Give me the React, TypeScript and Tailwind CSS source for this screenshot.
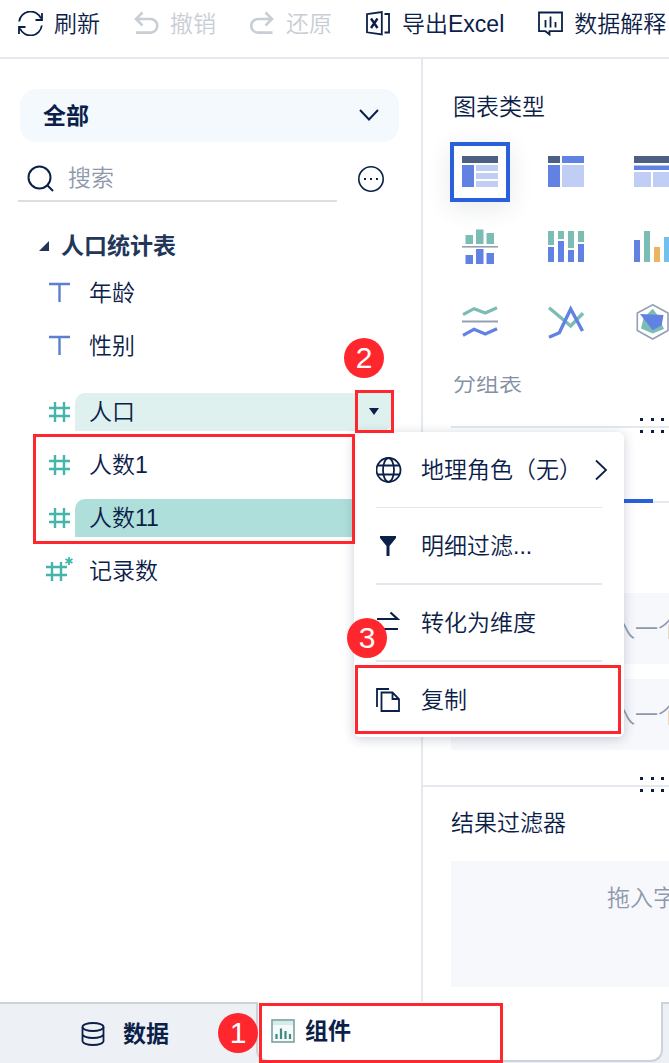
import { useState } from 'react';
import type { ReactNode } from 'react';
import clsx from 'clsx';

type FieldType = 'text' | 'number' | 'count';

interface Field {
  name: string;
  type: FieldType;
}

const dimensions: Field[] = [
  { name: '年龄', type: 'text' },
  { name: '性别', type: 'text' },
];

const NAVY = '#0b2048';
const BLUE = '#6182e2';
const LIGHT = '#c0cdf5';
const SLATE = '#4d5f83';
const GREEN = '#7bbdb5';
const GRAY = '#959fb4';

/* ---------- toolbar icons ---------- */

const RefreshIcon = () => (
  <svg width="25" height="25" viewBox="0 0 25 25" fill="none" stroke="currentColor" strokeWidth="1.8">
    <path d="M1.2 10.5A11.4 11.4 0 0 1 23 7.5M24 2v7h-6.5M23.8 14.5A11.4 11.4 0 0 1 2 17.5M1 23v-7h6.5" />
  </svg>
);

const UndoIcon = () => (
  <svg width="25" height="25" viewBox="0 0 25 25" fill="none" stroke="currentColor" strokeWidth="2.6">
    <path d="M8.5 1.5 2 8l6.500 6.500M2 8h14.500a6.800 6.800 0 0 1 0 13.600H2" />
  </svg>
);

const RedoIcon = () => (
  <svg width="25" height="25" viewBox="0 0 25 25" fill="none" stroke="currentColor" strokeWidth="2.6">
    <path d="M15.5 1.5 22 8l-6.500 6.500M22 8H8a6.800 6.800 0 0 0 0 13.600h14.500" />
  </svg>
);

const ExcelIcon = () => (
  <svg width="25" height="25" viewBox="0 0 25 25" fill="none" stroke="currentColor" strokeWidth="1.8">
    <path d="M1 3.2 15.8 1v22.500L1 21.300zM18.500 3H23v18.500h-4.500" />
    <path d="m5 7.500 6.500 9.500M11.500 7.500 5 17" strokeWidth="2.4" />
  </svg>
);

const ExplainIcon = () => (
  <svg width="25" height="25" viewBox="0 0 25 25" fill="none" stroke="currentColor" strokeWidth="1.8">
    <path d="M1 1.500h23v18.700H11.500v3.300l-4-3.300H1zM7.500 9v7.500M12.500 5.500v11M17.500 11v5.500" />
  </svg>
);

const tools: { label: string; icon: ReactNode; disabled?: boolean }[] = [
  { label: '刷新', icon: <RefreshIcon /> },
  { label: '撤销', icon: <UndoIcon />, disabled: true },
  { label: '还原', icon: <RedoIcon />, disabled: true },
  { label: '导出Excel', icon: <ExcelIcon /> },
  { label: '数据解释', icon: <ExplainIcon /> },
];

/* ---------- field icons ---------- */

const FieldIcon = ({ type }: { type: FieldType }) => {
  if (type === 'text') {
    return (
      <svg className="shrink-0" width="29" height="26" viewBox="0 0 29 26" fill="none" stroke="#5b80d0" strokeWidth="2.4">
        <path d="M3 4h21M13.500 4v18" />
      </svg>
    );
  }
  if (type === 'count') {
    return (
      <svg className="shrink-0 overflow-visible" width="29" height="26" viewBox="0 0 29 26" fill="none" stroke="#43b5aa" strokeWidth="2.4">
        <path d="M0 9h21M0 17h21M6 4v19M15 4v19" />
        <path d="M23-1v8M19.500 1l7 4M26.500 1l-7 4" strokeWidth="1.8" />
      </svg>
    );
  }
  return (
    <svg className="shrink-0" width="29" height="26" viewBox="0 0 29 26" fill="none" stroke="#43b5aa" strokeWidth="2.4">
      <path d="M3 9h21M3 17h21M9 3v20M18 3v20" />
    </svg>
  );
};

/* ---------- menu icons ---------- */

const GlobeIcon = () => (
  <svg className="shrink-0" width="26" height="26" viewBox="0 0 26 26" fill="none" stroke={NAVY} strokeWidth="1.8">
    <circle cx="12.5" cy="13" r="12" />
    <ellipse cx="12.5" cy="13" rx="5.500" ry="12" />
    <path d="M2 8.500h21M2 17.500h21" />
  </svg>
);

const FilterIcon = () => (
  <svg className="shrink-0" width="26" height="26" viewBox="0 0 26 26">
    <path d="M4 3h16v2l-6.500 8v10h-3V13L4 5z" fill={NAVY} />
  </svg>
);

const ConvertIcon = () => (
  <svg className="shrink-0" width="26" height="26" viewBox="0 0 26 26" fill="none" stroke={NAVY} strokeWidth="2.2">
    <path d="M1 9h20.500l-7-6.500M22 19H1l7 6" />
  </svg>
);

const CopyIcon = () => (
  <svg className="shrink-0" width="26" height="26" viewBox="0 0 26 26" fill="none" stroke={NAVY} strokeWidth="1.8">
    <path d="M1 20V2h12" />
    <path d="M5.500 5.500h11l6.500 6.500v12H5.500zM16.500 5.500V12H23" />
  </svg>
);

/* ---------- chart type icons ---------- */

const Bars = ({ bars }: { bars: [number, number, number, number, string][] }) => (
  <>
    {bars.map(([x, y, w, h, fill]) => (
      <rect key={`${x}-${y}`} x={x} y={y} width={w} height={h} fill={fill} />
    ))}
  </>
);

const chartTypes: { name: string; drawing: ReactNode }[] = [
  {
    name: '分组表',
    drawing: <Bars bars={[[0, 2, 36, 7, SLATE], [0, 11, 12, 22, BLUE], [14, 11, 22, 6, LIGHT], [14, 19, 22, 6, LIGHT], [14, 27, 22, 6, LIGHT]]} />,
  },
  {
    name: '交叉表',
    drawing: <Bars bars={[[0, 2, 12, 7, SLATE], [14, 2, 22, 7, BLUE], [0, 11, 12, 22, BLUE], [14, 11, 22, 22, LIGHT]]} />,
  },
  {
    name: '明细表',
    drawing: <Bars bars={[[0, 2, 36, 7, SLATE], [0, 11.5, 36, 4.5, BLUE], [0, 18, 17, 15, LIGHT], [19, 18, 17, 15, LIGHT]]} />,
  },
  {
    name: '对比柱状图',
    drawing: (
      <Bars
        bars={[
          [3.5, 6, 7.5, 9, GREEN], [14, 0.5, 7.5, 14.5, GREEN], [24.5, 4, 7.5, 11, GREEN],
          [0, 17, 36, 1.6, GRAY],
          [3.5, 26, 7.5, 9, BLUE], [14, 20, 7.5, 15, BLUE], [24.5, 24, 7.5, 11, BLUE],
        ]}
      />
    ),
  },
  {
    name: '堆积柱状图',
    drawing: (
      <Bars
        bars={[
          [0, 2, 6, 14, GREEN], [10, 2, 6, 8, GREEN], [20, 2, 6, 17, GREEN], [30, 2, 6, 11, GREEN],
          [0, 18, 6, 15, BLUE], [10, 12, 6, 21, BLUE], [20, 21, 6, 12, BLUE], [30, 15, 6, 18, BLUE],
        ]}
      />
    ),
  },
  {
    name: '分区柱形图',
    drawing: <Bars bars={[[0, 11, 6, 22, BLUE], [10, 2, 6, 31, GREEN], [20, 18, 6, 15, '#ecb45f'], [30, 8, 6, 25, '#70c1ee']]} />,
  },
  {
    name: '范围面积图',
    drawing: (
      <g fill="none" strokeWidth="3.2">
        <path d="M1 10.700 12 4.700 23.300 9 35 3.700" stroke={GREEN} />
        <path d="M0 17.500h36" stroke={GRAY} strokeWidth="1.8" />
        <path d="M1 31.300 12 25.300 23.300 30 35 24.700" stroke={BLUE} />
      </g>
    ),
  },
  {
    name: '多系列折线图',
    drawing: (
      <g fill="none" strokeWidth="3.4">
        <path d="M1 3.700 22.700 22 35 9.300" stroke={GREEN} />
        <path d="M1 33.300 11.300 28.700 22.700 5 34.500 27" stroke={BLUE} />
      </g>
    ),
  },
  {
    name: '雷达图',
    drawing: (
      <>
        <path d="M18.700.800 34 9v17.500l-15.300 8.500L3.300 26.500V9z" fill="none" stroke={GRAY} strokeWidth="1.6" />
        <path d="M18.700 4.700 23.500 11 30 25l-11.300 4.500L7 24.500 9.500 14z" fill={GREEN} />
        <path d="M6 10 29.500 11l-1.800 10.300-9 5z" fill={BLUE} />
      </>
    ),
  },
];

/* ---------- callouts ---------- */

const Step = ({ n, className }: { n: number; className: string }) => (
  <span className={clsx('absolute z-40 flex size-10 items-center justify-center rounded-full bg-[#ff272e] text-[30px] leading-none font-normal text-white', className)}>{n}</span>
);

const Frame = ({ className }: { className: string }) => (
  <span className={clsx('pointer-events-none absolute z-30 border-3 border-[#ff272e]', className)} />
);

const DragDots = () => (
  <svg className="absolute -top-2 left-[217px]" width="55" height="15" viewBox="0 0 55 15" fill={NAVY}>
    {[0, 11, 21, 31, 42].map((x) => (
      <g key={x}>
        <rect x={x} y="0" width="3" height="3" />
        <rect x={x} y="12" width="3" height="3" />
      </g>
    ))}
  </svg>
);

const FieldRow = ({ field, highlight, children }: { field: Field; highlight?: string; children?: ReactNode }) => (
  <li className="relative flex h-[38px] items-center">
    <FieldIcon type={field.type} />
    <div className={clsx('flex h-full flex-1 items-center rounded-tl-[10px] rounded-br-[10px]', highlight)}>
      <button className="flex-1 pl-[14px] text-left">{field.name}</button>
    </div>
    {children}
  </li>
);

const FieldMenu = () => (
  <div role="menu" className="absolute top-[39px] left-[308px] z-20 w-[270px] rounded-md bg-white px-[22px] shadow-[0_2px_12px_rgba(20,35,70,0.22)]">
    <button role="menuitem" className="flex h-[76px] w-full items-center gap-[19px] border-b border-[#e4e8ee] text-left whitespace-nowrap">
      <GlobeIcon />
      <span className="flex-1">地理角色（无）</span>
      <svg className="-mr-[6px] -ml-8 shrink-0" width="14" height="22" viewBox="0 0 14 22" fill="none" stroke={NAVY} strokeWidth="1.8">
        <path d="m2 1.500 10 9.500-10 9.500" />
      </svg>
    </button>
    <button role="menuitem" className="flex h-[77px] w-full items-center gap-[19px] border-b-2 border-[#e4e8ee] text-left">
      <FilterIcon />
      明细过滤...
    </button>
    <button role="menuitem" className="flex h-[77px] w-full items-center gap-[19px] border-b-2 border-[#e4e8ee] text-left">
      <ConvertIcon />
      转化为维度
    </button>
    <button role="menuitem" className="flex h-[75px] w-full items-center gap-[19px] text-left">
      <CopyIcon />
      复制
    </button>
    <Frame className="bottom-[3px] left-px h-[69px] w-[266px]" />
    <Step n={3} className="bottom-[79px] -left-[7px]" />
  </div>
);

const FieldPanel = () => {
  const [menuOpen, setMenuOpen] = useState(true);

  return (
    <aside className="w-[423px] shrink-0 border-r-2 border-[#e5e8ef] pt-[30px]">
      <div className="pr-[22px] pl-[18px]">
        <div className="relative ml-0.5">
          <select aria-label="字段范围" className="h-[53px] w-full appearance-none rounded-2xl bg-[#f4f9fe] pl-[23px] font-bold">
            <option>全部</option>
          </select>
          <svg className="pointer-events-none absolute top-[19px] right-5" width="20" height="14" viewBox="0 0 20 14" fill="none" stroke={NAVY} strokeWidth="2">
            <path d="m1 2 9 9.500L19 2" />
          </svg>
        </div>
        <div className="mt-[14px] flex items-center">
          <label className="flex h-[46px] flex-1 items-center gap-[14px] border-b-2 border-[#dcdee4] pl-[9px]">
            <svg className="shrink-0" width="27" height="27" viewBox="0 0 27 27" fill="none" stroke={NAVY} strokeWidth="2">
              <circle cx="12.5" cy="12.5" r="11" />
              <path d="m20.500 20.500 5.500 5.500" />
            </svg>
            <input type="text" aria-label="搜索" placeholder="搜索" className="w-full min-w-0 outline-none placeholder:text-[#8f99ab]" />
          </label>
          <button aria-label="更多" className="mr-[15px] ml-[21px]">
            <svg width="26" height="26" viewBox="0 0 26 26" fill={NAVY}>
              <circle cx="13" cy="13" r="12.2" fill="none" stroke={NAVY} strokeWidth="1.6" />
              <rect x="6" y="12" width="2" height="2" />
              <rect x="12" y="12" width="2" height="2" />
              <rect x="18" y="12" width="2" height="2" />
            </svg>
          </button>
        </div>
      </div>

      <button className="mt-[25px] flex h-[38px] items-center gap-[12px] pl-[39px] font-bold text-[#22365a]">
        <svg width="10" height="10" viewBox="0 0 10 10" fill="currentColor">
          <path d="M10 0v10H0z" />
        </svg>
        人口统计表
      </button>

      <ul className="mt-[9px] flex flex-col gap-[15px] pr-[29px] pl-[46px]">
        {dimensions.map((field) => (
          <FieldRow key={field.name} field={field} />
        ))}
      </ul>

      <ul className="mt-7 flex flex-col gap-[15px] pr-[29px] pl-[46px]">
        <FieldRow field={{ name: '人口', type: 'number' }} highlight="bg-[#def1ee]">
          <button aria-label="字段菜单" onClick={() => setMenuOpen(!menuOpen)} className="absolute right-0 flex h-full w-[37px] items-center justify-center">
            <svg width="10" height="8" viewBox="0 0 10 8" fill={NAVY}>
              <path d="M0 0h10L5 7z" />
            </svg>
            <Frame className="-top-[3px] -right-0.5 -bottom-0.5 left-0" />
          </button>
          <Step n={2} className="-top-[55px] left-[298px]" />
          {menuOpen && <FieldMenu />}
        </FieldRow>
        <FieldRow field={{ name: '人数1', type: 'number' }}>
          <Frame className="-top-[12px] -left-[13px] h-[110px] w-[322px]" />
        </FieldRow>
        <FieldRow field={{ name: '人数11', type: 'number' }} highlight="bg-[#aedfda]" />
        <FieldRow field={{ name: '记录数', type: 'count' }} />
      </ul>
    </aside>
  );
};

const ChartPanel = () => {
  const [selected, setSelected] = useState('分组表');

  return (
    <main className="min-w-0 flex-1 overflow-hidden">
      <section className="pt-[33px] pb-[35px] whitespace-nowrap">
        <h2 className="ml-[30px]">图表类型</h2>
        <div className="mt-5 ml-[27px] grid grid-cols-[repeat(3,60px)] gap-x-[26px] gap-y-[15px]">
          {chartTypes.map(({ name, drawing }) => (
            <button
              key={name}
              aria-label={name}
              onClick={() => setSelected(name)}
              className={clsx('flex size-[60px] items-center justify-center', selected === name && 'border-4 border-[#2b60dc] shadow-[0_6px_24px_rgba(20,35,70,0.10)]')}
            >
              <svg className="shrink-0" width="36" height="36" viewBox="0 0 36 36">{drawing}</svg>
            </button>
          ))}
        </div>
        <div className="mt-6 ml-[30px] flex h-[22px] items-end overflow-hidden text-[#8490a5]">{selected}</div>
        <div className="relative mt-7">
          <div className="ml-7 h-0.5 bg-[#e5e8ef]" />
          <DragDots />
        </div>
        <div className="mt-[71px] ml-7 flex items-end">
          <div className="h-1 w-[202px] bg-[#2b60dc]" />
          <div className="h-0.5 flex-1 bg-[#e5e8ef]" />
        </div>
        <div className="mt-[90px] ml-7 flex flex-col gap-[15px] text-[#8f99ab]">
          <div className="flex h-[71px] items-center bg-[#f7f8fc] pl-[138px]">拖入一个字段</div>
          <div className="flex h-[71px] items-center bg-[#f7f8fc] pl-[138px]">拖入一个字段</div>
        </div>
      </section>

      <section className="pb-[15px] whitespace-nowrap">
        <div className="relative h-0.5 bg-[#e5e8ef]">
          <DragDots />
        </div>
        <h2 className="mt-[21px] ml-7">结果过滤器</h2>
        <div className="mt-[23px] ml-7 h-[126px] bg-[#f7f8fc] pt-[22px] pl-[156px] text-[#8f99ab]">拖入字段</div>
      </section>
    </main>
  );
};

const TabBar = () => (
  <nav className="relative flex h-[61px] bg-[#edf0f5] font-bold">
    <button className="flex w-[256px] items-center gap-[18px] border-t-2 border-[#cdd1da] pl-[81px]">
      <svg width="24" height="24" viewBox="0 0 24 24" fill="none" stroke={NAVY} strokeWidth="1.8">
        <ellipse cx="12" cy="5" rx="10.5" ry="4" />
        <path d="M1.500 5v14c0 2.200 4.700 4 10.500 4s10.500-1.800 10.500-4V5M1.500 12c0 2.200 4.700 4 10.500 4s10.500-1.800 10.500-4" />
      </svg>
      数据
    </button>
    <button className="mr-auto flex h-[60px] w-[407px] shrink-0 items-center gap-[10px] rounded-b-xl border-x-2 border-b-2 border-[#cdd1da] bg-white pl-[13px]">
      <svg width="24" height="24" viewBox="0 0 24 24" fill="none" stroke="#7d9fa0" strokeWidth="1.6">
        <rect x="1" y="1" width="22" height="22" fill="#f4faf9" />
        <path d="M2 4h20" stroke="#d5ecea" strokeWidth="4" />
        <path d="M5.500 20v-5M10 20V9.500M14.500 20v-8M19 20v-5" stroke="#3f8a86" strokeWidth="2.2" />
      </svg>
      组件
    </button>
    <span className="flex-1 border-t-2 border-[#cdd1da]" />
    <Frame className="top-px left-[259px] h-[60px] w-[244px]" />
    <Step n={1} className="top-[11px] left-[218px]" />
  </nav>
);

const App = () => (
  <div className="flex min-h-screen flex-col overflow-hidden bg-white font-['Liberation_Sans','Noto_Sans_CJK_SC',sans-serif] text-[23px] leading-[30px] font-[350] text-[#0b2048]">
    <header className="flex gap-[34px] border-b-2 border-[#e5e8ef] pb-[10px] pl-[18px] whitespace-nowrap">
      {tools.map(({ label, icon, disabled }) => (
        <button key={label} disabled={disabled} className="flex h-[47px] shrink-0 items-center gap-[11px] disabled:text-[#c9ced6]">
          {icon}
          {label}
        </button>
      ))}
    </header>
    <div className="flex flex-1">
      <FieldPanel />
      <ChartPanel />
    </div>
    <TabBar />
  </div>
);

export default App;
